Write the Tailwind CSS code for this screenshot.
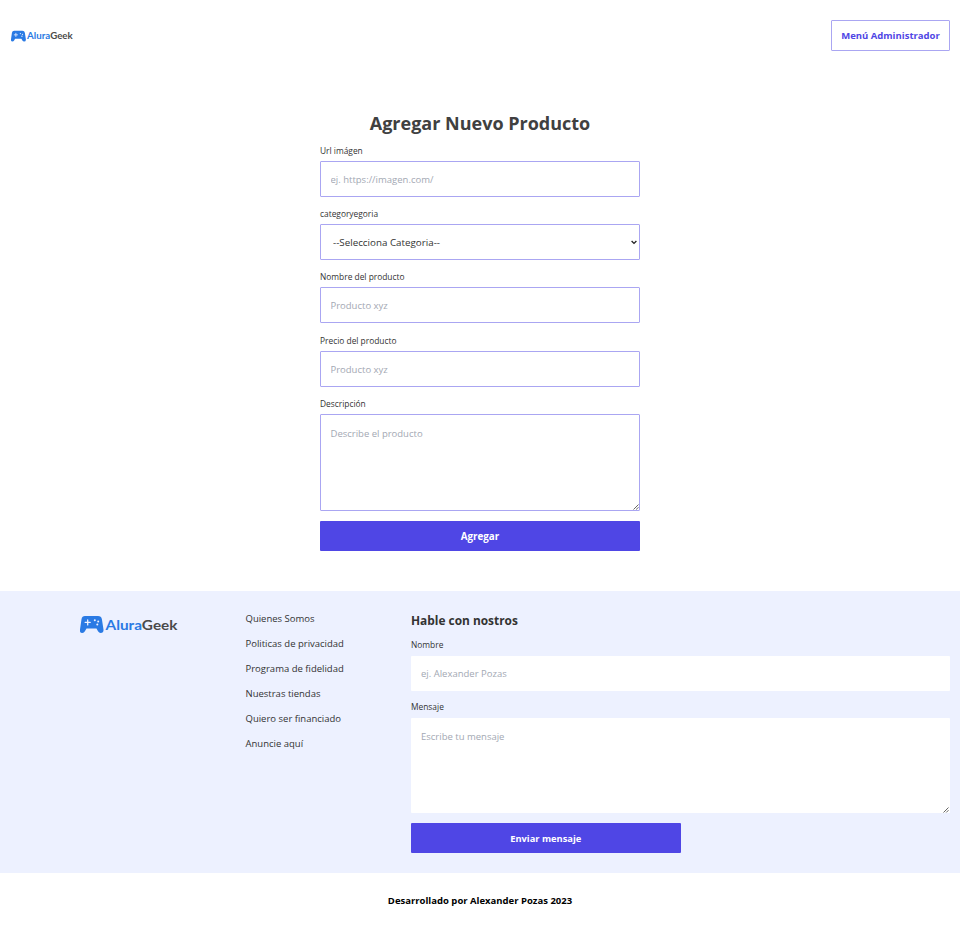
<!DOCTYPE html>
<html lang="es">
<head>
<meta charset="UTF-8">
<title>AluraGeek</title>
<script src="https://cdn.jsdelivr.net/npm/@tailwindcss/browser@4"></script>
</head>
<body class="bg-white font-['Open_Sans','Noto_Sans',sans-serif] text-[9.500px] leading-[15px] text-[#333333]">
<svg class="hidden">
  <symbol id="logo" viewBox="0 0 98 20">
    <path fill="#2a7ae4" d="M5 1h13q3.300 0 3.900 3.200l1.600 10.300q.3 3.500-2.800 3.500-1.700 0-2.700-1.700L16.500 13.500h-10L4.900 16.300Q4 18 2.300 18-.6 18 0 14.500L1.500 4.200Q2 1 5 1z"/>
    <path fill="none" stroke="#edf1ff" stroke-width="1.300" stroke-linecap="round" d="M7.700 4.900v5M5.200 7.400h5"/>
    <g fill="#edf1ff"><circle cx="14.800" cy="5.300" r="1"/><circle cx="18.200" cy="6.500" r="1"/><circle cx="17.300" cy="9.600" r="1"/></g>
    <text x="25.500" y="14.500" font-family="Lato, sans-serif" font-weight="700" font-size="14" textLength="72" lengthAdjust="spacingAndGlyphs"><tspan fill="#2a7ae4">Alura</tspan><tspan fill="#4a4a4a">Geek</tspan></text>
  </symbol>
  <symbol id="grip" viewBox="0 0 6 6"><path d="M.5 5.500l5-5M3.200 5.500l2.300-2.300" fill="none" stroke="#555" stroke-width=".9"/></symbol>
</svg>

<header class="flex h-[71px] items-center justify-between pt-5 pr-[10px] pb-5 pl-[11px]">
  <svg class="mt-[2px] h-[13px] w-[62px]"><use href="#logo"/></svg>
  <a class="flex h-[31px] w-[119px] items-center justify-center rounded-[1px] border border-[#aaa6f2] pb-px font-bold whitespace-nowrap text-[#4f46e5]">Menú Administrador</a>
</header>

<main class="mx-auto flex w-80 flex-col pt-[38px]">
  <h1 class="text-center text-[18px] leading-[29px] font-bold whitespace-nowrap text-[#404040]">Agregar Nuevo Producto</h1>
  <form class="flex flex-col">
    <label class="mt-[4.700px] h-[18px] text-[8.400px] leading-[15px]">Url imágen</label>
    <input class="h-9 rounded-[1px] border border-[#aaa6f2] px-[9.500px] pt-px placeholder:text-[#a3a8b3]" placeholder="ej. https://imagen.com/">
    <label class="mt-[9.400px] h-[18px] text-[8.400px] leading-[15px]">categoryegoria</label>
    <div class="relative">
      <select class="block h-9 w-full appearance-none rounded-[1px] border border-[#aaa6f2] bg-white px-[12px] pt-px text-[9.800px]"><option>--Selecciona Categoria--</option></select>
      <svg class="absolute top-[16px] right-[3px] h-[5px] w-[6px]" viewBox="0 0 6 5"><path d="M.6 1l2.400 2.400L5.400 1" fill="none" stroke="#222" stroke-width="1.300"/></svg>
    </div>
    <label class="mt-[9.400px] h-[18px] text-[8.400px] leading-[15px]">Nombre del producto</label>
    <input class="h-9 rounded-[1px] border border-[#aaa6f2] px-[9.500px] pt-px placeholder:text-[#a3a8b3]" placeholder="Producto xyz">
    <label class="mt-[9.400px] h-[18px] text-[8.400px] leading-[15px]">Precio del producto</label>
    <input class="h-9 rounded-[1px] border border-[#aaa6f2] px-[9.500px] pt-px placeholder:text-[#a3a8b3]" placeholder="Producto xyz">
    <label class="mt-[9.400px] h-[18px] text-[8.400px] leading-[15px]">Descripción</label>
    <div class="relative">
      <textarea class="block h-[96.300px] w-full resize-none rounded-[1px] border border-[#aaa6f2] px-[9.500px] pt-[10.500px] placeholder:text-[#a3a8b3]" placeholder="Describe el producto"></textarea>
      <svg class="absolute right-[1px] bottom-[1px] size-[6px]"><use href="#grip"/></svg>
    </div>
    <button class="mt-[10px] h-[30px] rounded-[1px] bg-[#4f46e5] pt-px text-[9.800px] font-bold text-white">Agregar</button>
  </form>
</main>

<footer class="mt-10">
  <div class="flex h-[282.500px] bg-[#edf1ff] pr-[10px] pl-20">
    <div class="w-[165.500px] pt-[24px]"><svg class="h-5 w-[98px]"><use href="#logo"/></svg></div>
    <nav class="flex w-[165.500px] flex-col gap-[10px] pt-[20.300px] whitespace-nowrap">
      <a>Quienes Somos</a><a>Politicas de privacidad</a><a>Programa de fidelidad</a><a>Nuestras tiendas</a><a>Quiero ser financiado</a><a>Anuncie aquí</a>
    </nav>
    <form class="flex flex-1 flex-col pt-5">
      <h2 class="h-[18px] text-[11.900px] leading-[18px] font-bold">Hable con nostros</h2>
      <label class="mt-[9px] h-[18px] text-[8.400px] leading-[14px]">Nombre</label>
      <input class="h-[35px] rounded-[1px] bg-white px-[10px] pt-px placeholder:text-[#a3a8b3]" placeholder="ej. Alexander Pozas">
      <label class="mt-[9.500px] h-[18px] text-[8.400px] leading-[14px]">Mensaje</label>
      <div class="relative">
        <textarea class="block h-[95px] w-full resize-none rounded-[1px] bg-white px-[10px] py-[10.500px] placeholder:text-[#a3a8b3]" placeholder="Escribe tu mensaje"></textarea>
        <svg class="absolute right-[1px] bottom-0 size-[6px]"><use href="#grip"/></svg>
      </div>
      <button class="mt-[10px] h-[30px] w-[269.500px] rounded-[1px] bg-[#4f46e5] pt-px text-[9.300px] font-bold text-white">Enviar mensaje</button>
    </form>
  </div>
  <p class="flex h-[55px] items-center justify-center pb-px font-bold text-black">Desarrollado por Alexander Pozas 2023</p>
</footer>
</body>
</html>
